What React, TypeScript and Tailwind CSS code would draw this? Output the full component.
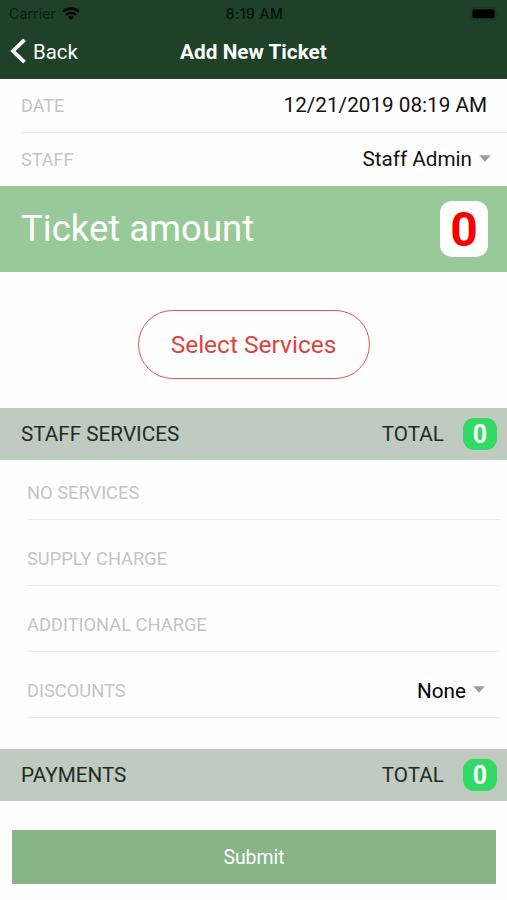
import type { ReactNode } from 'react'

const charges = ['NO SERVICES', 'SUPPLY CHARGE', 'ADDITIONAL CHARGE']

function WifiIcon() {
  return (
    <svg viewBox="0 0 18 13" className="w-[18px] h-[13px]" fill="none">
      <path d="M1.2 4.7a11.2 11.2 0 0 1 15.6 0" stroke="#000" strokeWidth="2.5" />
      <path d="M4 7.9a7.2 7.2 0 0 1 10 0" stroke="#000" strokeWidth="2.3" />
      <path d="M9 13 6.1 10.1a4.2 4.2 0 0 1 5.8 0Z" fill="#000" />
    </svg>
  )
}

function BatteryIcon() {
  return (
    <svg viewBox="0 0 30 14" className="w-[30px] h-[14px]">
      <rect x="0.5" y="0.5" width="25.5" height="12.5" rx="3.5" fill="none" stroke="#1a3a23" />
      <rect x="2.4" y="2.3" width="22.3" height="9" rx="2" fill="#000" />
      <path d="M27.3 4.8c1.5.8 1.5 3.2 0 4Z" fill="#1a3a23" />
    </svg>
  )
}

function Caret() {
  return (
    <svg viewBox="0 0 12 7" className="w-3 h-[7px] mb-[2px]">
      <path d="M0.3 0.3h11.4L6 6.8Z" fill="#9c9c9c" />
    </svg>
  )
}

function ChargeRow({ label, children }: { label: string; children?: ReactNode }) {
  return (
    <div className="ml-[27px] mr-[7px] h-[66px] pt-[13px] pr-[15px] flex items-center justify-between border-b border-[#ececec]">
      <span className="text-[18.3px] text-[#c4c4c4]">{label}</span>
      {children}
    </div>
  )
}

function SectionBar({ title, total }: { title: string; total: number }) {
  return (
    <div className="h-[52px] pl-[21px] pr-[10px] shrink-0 flex items-center bg-[#becbbe] text-[20.7px] text-[#222b24]">
      <span>{title}</span>
      <span className="ml-auto">TOTAL</span>
      <span className="ml-[19px] w-[34px] h-8 pt-px flex items-center justify-center rounded-[11px] bg-[#32d963] text-[25px] font-bold text-white">
        {total}
      </span>
    </div>
  )
}

export default function App() {
  return (
    <div className="w-[507px] h-[900px] flex flex-col overflow-hidden bg-[#fefefe] font-[Roboto,sans-serif] leading-none text-[#111]">
      <header className="h-[79px] shrink-0 bg-[#1e4128]">
        <div className="h-[27px] pl-[9px] pr-[7px] grid grid-cols-3 items-center font-[Inter,sans-serif] text-sm text-black">
          <div className="flex items-center gap-[6px]">
            <span className="tracking-[0.15px] text-[#0b1a10]">Carrier</span>
            <WifiIcon />
          </div>
          <span className="text-center font-medium tracking-[0.5px] text-[#061009]">8:19 AM</span>
          <div className="flex justify-end">
            <BatteryIcon />
          </div>
        </div>
        <div className="h-[50px] pl-[10px] pr-[10px] grid grid-cols-[1fr_auto_1fr] items-center text-white">
          <button className="flex items-center gap-[7px] text-[20.4px]">
            <svg viewBox="0 0 16 26" className="w-4 h-[26px] -mt-[2px]" fill="none">
              <path d="M14.5 1.8 3 13l11.5 11.2" stroke="#fff" strokeWidth="3.8" />
            </svg>
            Back
          </button>
          <h1 className="text-[20.8px] font-bold">Add New Ticket</h1>
        </div>
      </header>

      <div className="ml-[21px] h-[54px] pr-5 shrink-0 flex items-center justify-between border-b border-[#ececec]">
        <span className="pt-px text-[18px] text-[#c4c4c4]">DATE</span>
        <span className="text-[20.7px]">12/21/2019 08:19 AM</span>
      </div>
      <div className="ml-[21px] h-[53px] pr-4 shrink-0 flex items-center">
        <span className="pt-px text-[18px] text-[#c4c4c4]">STAFF</span>
        <span className="ml-auto mr-[7px] text-[20.7px]">Staff Admin</span>
        <Caret />
      </div>

      <div className="h-[86px] pl-[21px] pr-[19px] shrink-0 flex items-center justify-between bg-[#98ca99]">
        <span className="text-[36.5px] text-white">Ticket amount</span>
        <span className="w-12 h-14 pt-px flex items-center justify-center rounded-xl bg-white text-5xl font-bold text-[#f90000]">
          0
        </span>
      </div>

      <div className="h-[136px] pt-2 shrink-0 flex items-center justify-center">
        <button className="w-[232px] h-[69px] pt-[2px] rounded-full border border-[#e35353] text-[24.5px] text-[#df4340]">
          Select Services
        </button>
      </div>

      <SectionBar title="STAFF SERVICES" total={0} />
      <div className="-mt-[6px] pb-[31px]">
        {charges.map((label) => (
          <ChargeRow key={label} label={label} />
        ))}
        <ChargeRow label="DISCOUNTS">
          <span className="flex items-center gap-[7px] text-[20.7px] text-black">
            None
            <Caret />
          </span>
        </ChargeRow>
      </div>
      <SectionBar title="PAYMENTS" total={0} />

      <button className="ml-3 mr-[11px] mt-[29px] h-[54px] pt-[2px] shrink-0 bg-[#87b588] text-[19.4px] text-white">
        Submit
      </button>
    </div>
  )
}
